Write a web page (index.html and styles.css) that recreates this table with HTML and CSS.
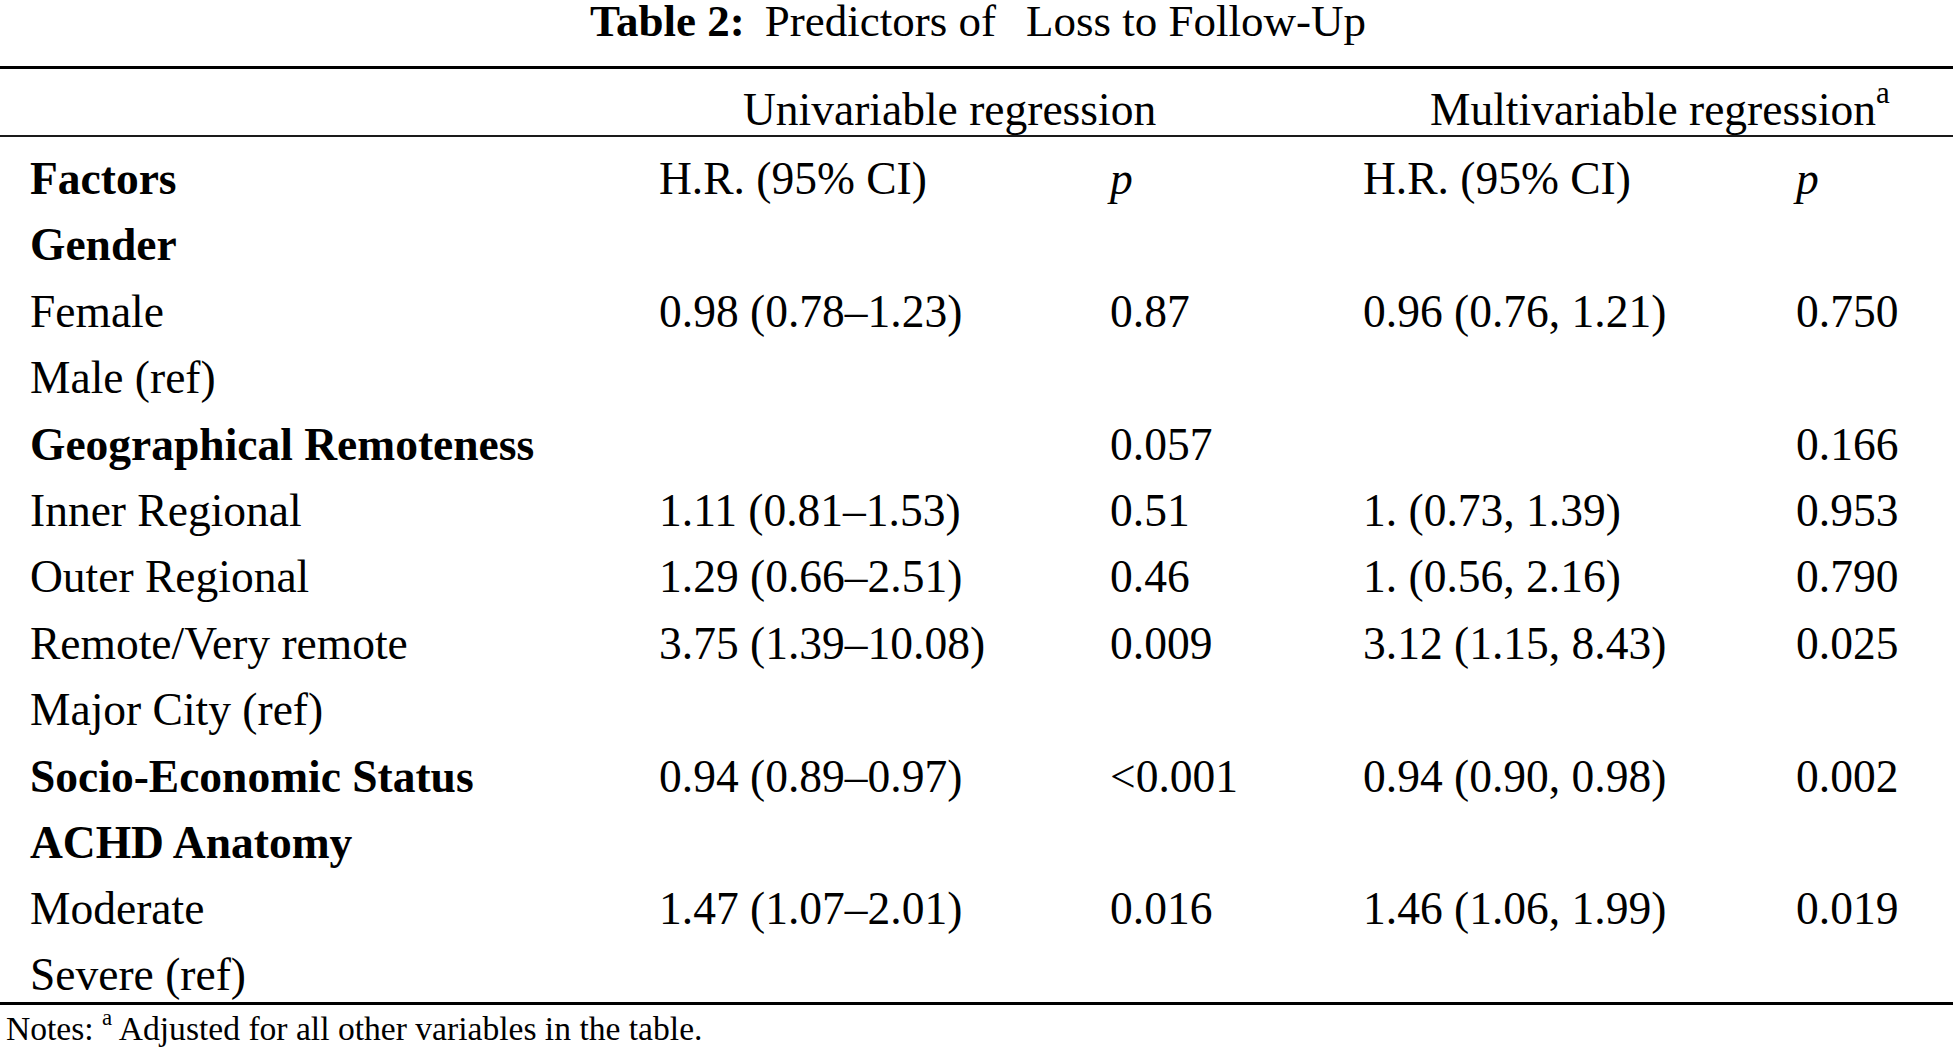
FILE: index.html
```html
<!DOCTYPE html>
<html lang="en">
<head>
<meta charset="utf-8">
<title>Table 2: Predictors of Loss to Follow-Up</title>
<link rel="stylesheet" href="styles.css">
</head>
<body>
<div class="page">
  <h1 class="title"><span class="title-label">Table 2:</span><span class="title-text">Predictors of<span class="gap"></span>Loss to Follow-Up</span></h1>
  <table class="tbl">
    <colgroup>
      <col class="c1"><col class="c2"><col class="c3"><col class="c4"><col class="c5">
    </colgroup>
    <thead>
      <tr class="grp">
        <th></th>
        <th colspan="2" class="g1">Univariable regression</th>
        <th colspan="2" class="g2">Multivariable regression<sup class="sup">a</sup></th>
      </tr>
    </thead>
    <tbody>
      <tr class="first"><td class="b">Factors</td><td>H.R. (95% CI)</td><td><i>p</i></td><td>H.R. (95% CI)</td><td><i>p</i></td></tr>
      <tr><td class="b">Gender</td><td></td><td></td><td></td><td></td></tr>
      <tr><td>Female</td><td>0.98 (0.78–1.23)</td><td>0.87</td><td>0.96 (0.76, 1.21)</td><td>0.750</td></tr>
      <tr><td>Male (ref)</td><td></td><td></td><td></td><td></td></tr>
      <tr><td class="b">Geographical Remoteness</td><td></td><td>0.057</td><td></td><td>0.166</td></tr>
      <tr><td>Inner Regional</td><td>1.11 (0.81–1.53)</td><td>0.51</td><td>1. (0.73, 1.39)</td><td>0.953</td></tr>
      <tr><td>Outer Regional</td><td>1.29 (0.66–2.51)</td><td>0.46</td><td>1. (0.56, 2.16)</td><td>0.790</td></tr>
      <tr><td>Remote/Very remote</td><td>3.75 (1.39–10.08)</td><td>0.009</td><td>3.12 (1.15, 8.43)</td><td>0.025</td></tr>
      <tr><td>Major City (ref)</td><td></td><td></td><td></td><td></td></tr>
      <tr><td class="b">Socio-Economic Status</td><td>0.94 (0.89–0.97)</td><td>&lt;0.001</td><td>0.94 (0.90, 0.98)</td><td>0.002</td></tr>
      <tr><td class="b">ACHD Anatomy</td><td></td><td></td><td></td><td></td></tr>
      <tr><td>Moderate</td><td>1.47 (1.07–2.01)</td><td>0.016</td><td>1.46 (1.06, 1.99)</td><td>0.019</td></tr>
      <tr class="last"><td>Severe (ref)</td><td></td><td></td><td></td><td></td></tr>
    </tbody>
  </table>
  <p class="notes">Notes: <sup class="sup-note">a</sup> Adjusted for all other variables in the table.</p>
</div>
</body>
</html>
```
FILE: styles.css
```css
html, body {
  margin: 0;
  padding: 0;
  background: #ffffff;
}

body {
  font-family: "Liberation Serif", "Times New Roman", serif;
  color: #000000;
}

.page {
  width: 1956px;
}

.title {
  box-sizing: border-box;
  margin: 0;
  height: 38px;
  padding-top: 4px;
  line-height: 35.6px;
  font-size: 45px;
  font-weight: normal;
  text-align: center;
  white-space: nowrap;
}

.title-label {
  font-weight: bold;
}

.title-text {
  margin-left: 20px;
}

.gap {
  display: inline-block;
  width: 30px;
}

.tbl {
  margin-top: 28px;
  width: 1953px;
  border-collapse: separate;
  border-spacing: 0;
  border-top: 3px solid #000;
  border-bottom: 3px solid #000;
  font-size: 45.5px;
  table-layout: fixed;
}

.c1 { width: 629px; }
.c2 { width: 451px; }
.c3 { width: 253px; }
.c4 { width: 433px; }
.c5 { width: 187px; }

.tbl th,
.tbl td {
  padding: 0 0 0 30px;
  text-align: left;
  font-weight: normal;
  white-space: nowrap;
  vertical-align: baseline;
}

.grp th {
  padding-top: 15.7px;
  line-height: 50px;
  border-bottom: 2px solid #1a1a1a;
}

.grp .g1 {
  padding-left: 114px;
}

.grp .g2 {
  padding-left: 97px;
}

.tbl td {
  padding-top: 10.9px;
  line-height: 55.5px;
}

.tbl .first td {
  padding-top: 14.4px;
}

.tbl .last td {
  line-height: 54.2px;
}

.tbl td.b {
  font-weight: bold;
}

.sup {
  font-size: 0.68em;
  line-height: 0;
  vertical-align: 0.72em;
}

.sup-note {
  font-size: 0.68em;
  line-height: 0;
  vertical-align: 0.65em;
}

.notes {
  margin: 6.5px 0 0 0;
  padding-left: 6px;
  font-size: 33.6px;
  line-height: 36px;
  white-space: nowrap;
}
```
